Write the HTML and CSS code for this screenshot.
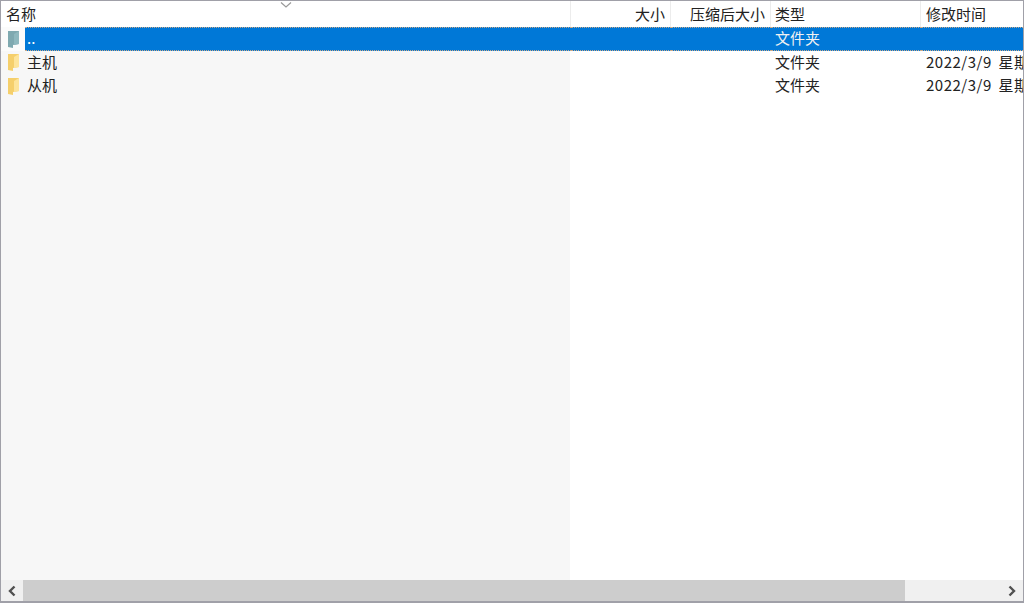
FILE: index.html
```html
<!DOCTYPE html>
<html lang="zh-CN">
<head>
<meta charset="utf-8">
<title>文件列表</title>
<link rel="stylesheet" href="styles.css">
</head>
<body>
<div class="window">
  <div class="header row-grid">
    <div class="hcell name-head">名称
      <svg class="sort" width="12" height="6" viewBox="0 0 12 6"><path d="M1 .5 6 5 11 .5" fill="none" stroke="#9a9a9a" stroke-width="1.2"/></svg>
    </div>
    <div class="hcell right">大小</div>
    <div class="hcell right">压缩后大小</div>
    <div class="hcell type-head">类型</div>
    <div class="hcell last">修改时间</div>
  </div>
  <div class="list">
    <div class="row row-grid selected">
      <div class="cell name">
        <svg class="icon" width="14" height="18" viewBox="0 0 14 18"><path d="M1 1h11v13l-6 1v3l-5-1z" fill="#7fa9b0"/><path d="M7 4l5-3v13l-5 1z" fill="#8fb8be"/></svg>
        <span class="label">..</span>
      </div>
      <div class="cell"></div>
      <div class="cell"></div>
      <div class="cell type">文件夹</div>
      <div class="cell date"></div>
    </div>
    <div class="row row-grid">
      <div class="cell name">
        <svg class="icon" width="14" height="18" viewBox="0 0 14 18"><path d="M1 1h11v13l-6 1v3l-5-1z" fill="#f5cf6b"/><path d="M7 4l5-3v13l-5 1z" fill="#fde49a"/></svg>
        <span class="label">主机</span>
      </div>
      <div class="cell"></div>
      <div class="cell"></div>
      <div class="cell type">文件夹</div>
      <div class="cell date">2022/3/9 星期三</div>
    </div>
    <div class="row row-grid">
      <div class="cell name">
        <svg class="icon" width="14" height="18" viewBox="0 0 14 18"><path d="M1 1h11v13l-6 1v3l-5-1z" fill="#f5cf6b"/><path d="M7 4l5-3v13l-5 1z" fill="#fde49a"/></svg>
        <span class="label">从机</span>
      </div>
      <div class="cell"></div>
      <div class="cell"></div>
      <div class="cell type">文件夹</div>
      <div class="cell date">2022/3/9 星期三</div>
    </div>
  </div>
  <div class="scrollbar">
    <div class="arrow"><svg width="10" height="12" viewBox="0 0 10 12"><path d="M7.500 1.500 3 6 7.500 10.500" fill="none" stroke="#505050" stroke-width="2.4"/></svg></div>
    <div class="track"><div class="thumb"></div></div>
    <div class="arrow"><svg width="10" height="12" viewBox="0 0 10 12"><path d="M2.500 1.500 7 6 2.500 10.500" fill="none" stroke="#505050" stroke-width="2.4"/></svg></div>
  </div>
</div>
</body>
</html>
```
FILE: styles.css
```css
* { box-sizing: border-box; }
html, body { margin: 0; padding: 0; overflow: hidden; }
body {
  width: 1024px;
  height: 603px;
  font-family: "Noto Sans CJK SC", "Noto Sans", sans-serif;
  font-size: 15px;
  color: #222;
  background: #fff;
}
.window {
  width: 1024px;
  height: 603px;
  display: flex;
  flex-direction: column;
  border: 1px solid #a0a0a8;
  border-width: 1px 1px 2px 1px;
  overflow: hidden;
}
.row-grid {
  display: grid;
  grid-template-columns: 570px 100px 100px 150px 1fr;
}
.header { height: 26px; flex: none; background: #fff; }
.hcell {
  position: relative;
  line-height: 26px;
  padding: 0 6px;
  white-space: nowrap;
  overflow: hidden;
  border-right: 1px solid #ececec;
}
.hcell.name-head { padding-left: 5px; }
.hcell.right { text-align: right; padding-right: 5px; }
.hcell.type-head { padding-left: 4px; }
.hcell.last { border-right: 0; padding-left: 5px; }
.sort { position: absolute; left: 279px; top: 1px; }
.list {
  flex: 1;
  min-height: 0;
  background: linear-gradient(to right, #f7f7f7 569px, #fff 569px);
}
.row { height: 23.5px; line-height: 21.5px; }
.cell { white-space: nowrap; overflow: hidden; padding: 0 5px; }
.cell.name {
  display: flex;
  align-items: center;
  padding: 0 0 0 6px;
}
.icon { flex: none; margin-right: 4px; }
.label { padding-left: 2px; flex: 1; height: 100%; }
.type { padding-left: 4px; }
.date { letter-spacing: .5px; word-spacing: 3px; }
.selected { background: #0078d7; color: #f2f2f2; line-height: 19.5px; }
.selected .name { background: #fbfbfb; }
.selected .label {
  background: #0078d7;
  color: #fff;
}
.selected .label,
.selected .cell:not(.name) {
  border-top: 1px dotted #c9a98a;
  border-bottom: 1px dotted #c9a98a;
}
.scrollbar {
  height: 21px;
  flex: none;
  display: flex;
  background: #f0f0f0;
}
.arrow {
  width: 22px;
  flex: none;
  display: flex;
  align-items: center;
  justify-content: center;
}
.track { flex: 1; }
.thumb { width: 882px; height: 100%; background: #cdcdcd; }
```
